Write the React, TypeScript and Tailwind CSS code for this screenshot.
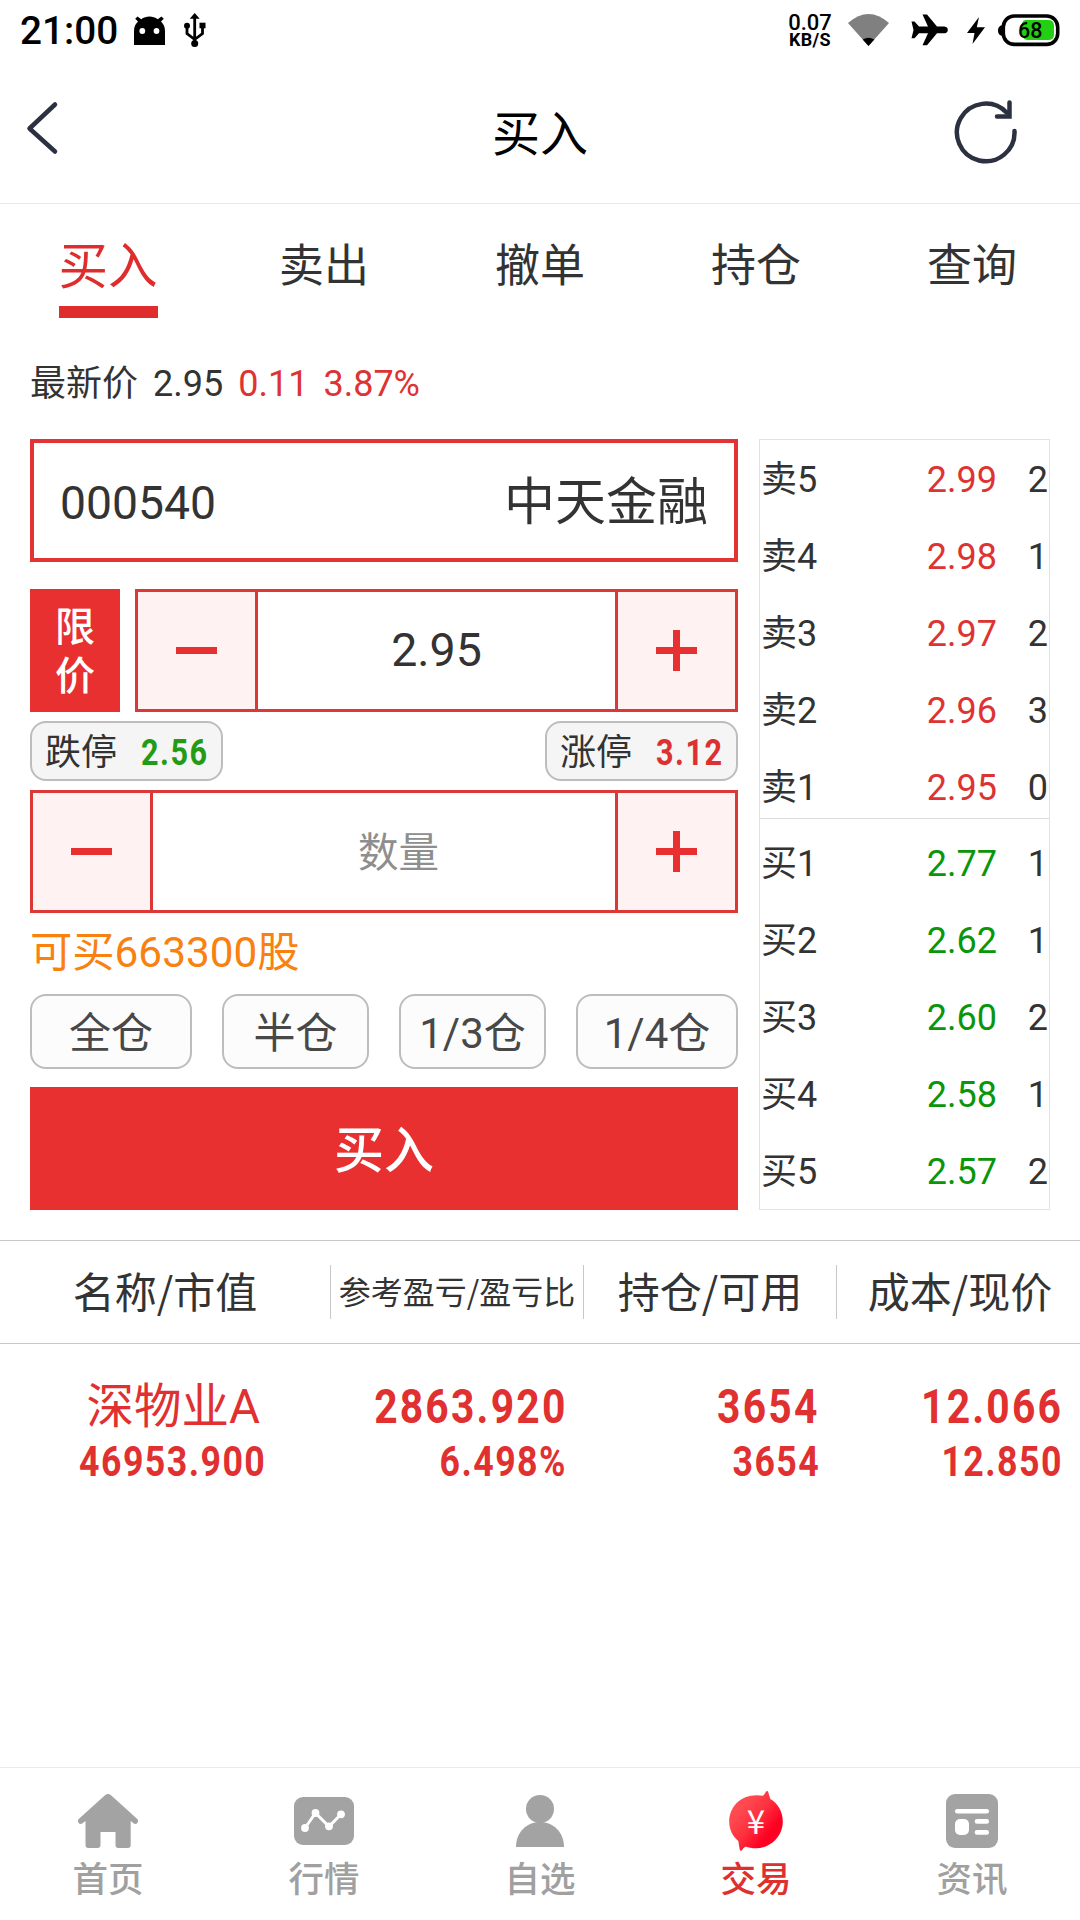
import { useState } from "react"
import type { ReactNode } from "react"
import clsx from "clsx"

const tabs = ["买入", "卖出", "撤单", "持仓", "查询"]

const asks = [
    { label: "卖5", price: "2.99", volume: "2" },
    { label: "卖4", price: "2.98", volume: "1" },
    { label: "卖3", price: "2.97", volume: "2" },
    { label: "卖2", price: "2.96", volume: "3" },
    { label: "卖1", price: "2.95", volume: "0" },
]

const bids = [
    { label: "买1", price: "2.77", volume: "1" },
    { label: "买2", price: "2.62", volume: "1" },
    { label: "买3", price: "2.60", volume: "2" },
    { label: "买4", price: "2.58", volume: "1" },
    { label: "买5", price: "2.57", volume: "2" },
]

function AndroidIcon() {
    return (
        <svg width="31" height="29" viewBox="0 0 31 29" className="ml-[17px]">
            <path d="M0 29V15C0 11 1.500 8 4 5.600L1.200 2.800L3.600 .5L7.200 3.300C12 -.4 19 -.4 23.800 3.300L27.400 .5L29.800 2.800L27 5.600C29.500 8 31 11 31 15V29Z" />
            <circle cx="8.300" cy="15" r="2.900" fill="#fff" />
            <circle cx="22.500" cy="15" r="2.900" fill="#fff" />
        </svg>
    )
}

function UsbIcon() {
    return (
        <svg width="22" height="34" viewBox="0 0 22 34" fill="none" stroke="#000" strokeWidth="2.800" className="ml-[19px]">
            <path d="M10.700 4V30M3 13V20.500L10.700 26.500M18.500 13V20.500L10.700 26.500" />
            <path d="M10.700 0L15.700 5.700H5.700Z" fill="#000" stroke="none" />
            <circle cx="3" cy="12.700" r="3" fill="#000" stroke="none" />
            <circle cx="10.700" cy="30.500" r="3.500" fill="#000" stroke="none" />
            <rect x="15.500" y="9.700" width="6" height="5.600" fill="#000" stroke="none" />
        </svg>
    )
}

function StatusBar() {
    return (
        <div className="flex h-[60px] items-center pl-[20px] pr-[20px] text-black">
            <span className="w-[97px] whitespace-nowrap pt-[2px] text-[38.7px] font-medium leading-[58px]">21:00</span>
            <AndroidIcon />
            <UsbIcon />
            <div className="ml-auto flex w-[44px] flex-col items-center pt-px">
                <span className="text-[22px] font-medium leading-[18px]">0.07</span>
                <span className="text-[18px] font-bold leading-[16px] tracking-[0.3px]">KB/S</span>
            </div>
            <svg width="41" height="32" viewBox="0 0 41 32" className="ml-[16px]">
                <path d="M0 9Q20.500 -9 41 9L20.500 32Z" fill="#808080" />
                <path d="M14.700 25.500Q20.500 22 26.300 25.500L20.500 32Z" />
            </svg>
            <svg width="37" height="32" viewBox="0 0 37 32" className="ml-[22px]">
                <path d="M0.500 7.500H3.500L8 12.500H17L11.500 .5H16L26 12.500H33.500Q36.800 13 36.800 15.900T33.500 19.300H26L16 31.300H11.500L17 19.300H8L3.500 24.300H.5L2.500 15.900Z" />
            </svg>
            <svg width="18" height="27" viewBox="0 0 18 27" className="ml-[19px]">
                <path d="M12 0L0 16H7.500L5.500 27L18 10.300H9.800Z" />
            </svg>
            <svg width="62" height="33" viewBox="0 0 62 33" className="ml-[13px]">
                <path d="M5 11Q0 11.500 0 16.500T5 22Z" />
                <rect x="5.300" y="2" width="54.400" height="28.400" rx="11" fill="#fff" stroke="#000" strokeWidth="3.600" />
                <path d="M27 6H50Q56 6 56 11.500V20.500Q56 26 50 26H30Q23.500 26 23.500 16T27 6Z" fill="#22cf12" />
                <text x="32.300" y="24" textAnchor="middle" fontSize="21.500" className="font-medium">68</text>
            </svg>
        </div>
    )
}

function Header() {
    return (
        <header className="flex h-[144px] items-center justify-between border-b border-[#e9e9e9] pl-[25px] pr-[60px]">
            <button aria-label="返回">
                <svg width="36" height="56" viewBox="0 0 36 56" fill="none" stroke="#2b3140" strokeWidth="4.500" strokeLinecap="round" strokeLinejoin="round" className="mb-[8px]">
                    <path d="M30 4.500L4.500 28.500L30 51.500" />
                </svg>
            </button>
            <h1 className="pl-[67px] pt-[6px] text-[48px] leading-[60px] text-black">买入</h1>
            <button aria-label="刷新">
                <svg width="68" height="68" viewBox="0 0 68 68" fill="none" stroke="#2b3140" strokeWidth="4.500" strokeLinecap="round">
                    <path d="M62.500 33A28.800 28.800 0 1 1 54.500 14.500" />
                    <path d="M57.500 4.500V18.500H45" />
                </svg>
            </button>
        </header>
    )
}

function Stepper({ children, className }: { children: ReactNode, className?: string }) {
    return (
        <div className={clsx("flex h-[123px] border-[3px] border-[#db3838]", className)}>
            <button className="flex w-[120px] items-center justify-center border-r-[3px] border-[#db3838] bg-[#fff2f2]" aria-label="减">
                <span className="h-[7px] w-[41px] bg-[#e83030]" />
            </button>
            <div className="flex flex-1 items-center justify-center">{children}</div>
            <button className="flex w-[120px] items-center justify-center border-l-[3px] border-[#db3838] bg-[#fff2f2]" aria-label="加">
                <svg width="41" height="41" viewBox="0 0 41 41" stroke="#e83030" strokeWidth="7">
                    <path d="M0 20.500H41M20.500 0V41" />
                </svg>
            </button>
        </div>
    )
}

function LimitPill({ label, price, color }: { label: string, price: string, color: string }) {
    return (
        <div className="flex h-[60px] w-[193px] items-center justify-between rounded-[16px] border-2 border-[#bdbdbd] bg-[#f5f5f5] pl-[13px] pr-[12px] pt-[4px]">
            <span className="text-[36px] leading-[52px]">{label}</span>
            <span className={clsx("origin-right scale-x-[0.85] text-[36px] font-bold leading-[52px] tracking-[1.8px]", color)}>{price}</span>
        </div>
    )
}

function BookRow({ label, price, volume, color }: { label: string, price: string, volume: string, color: string }) {
    return (
        <div className="flex h-[77px] shrink-0 items-center pl-px pr-px pt-[4px] text-[36px] leading-[73px]">
            <span>{label}</span>
            <span className={clsx("ml-auto", color)}>{price}</span>
            <span className="w-[51px] text-right">{volume}</span>
        </div>
    )
}

// Figures are set narrow and widely tracked, flush right
function Holding({ top, bottom, className }: { top: ReactNode, bottom: string, className: string }) {
    return (
        <div className={clsx("flex flex-col items-end font-bold text-[#e03030]", className)}>
            {typeof top === "string" ? (
                <span className="origin-right scale-x-[0.85] text-[48px] leading-[60px] tracking-[2.600px]">{top}</span>
            ) : top}
            <span className="origin-right scale-x-[0.85] text-[42px] leading-[50px] tracking-[1.700px]">{bottom}</span>
        </div>
    )
}

const navItems = [
    {
        label: "首页",
        icon: (
            <svg width="60" height="54" viewBox="0 0 60 54" fill="#a3a3a3">
                <path d="M27 1.200Q30 -1.200 33 1.200L59.300 25Q60.300 26.200 60 28Q58.600 31 55.800 29.600L52.700 27V51Q52.700 54 49.700 54H40.500Q37.500 54 37.500 51V38H22.500V51Q22.500 54 19.500 54H10.500Q7.500 54 7.500 51V27L4.200 29.600Q1.400 31 0 28Q-.3 26.200 .7 25Z" />
            </svg>
        ),
    },
    {
        label: "行情",
        icon: (
            <svg width="60" height="48" viewBox="0 0 60 48">
                <rect width="60" height="48" rx="9" fill="#a3a3a3" />
                <path d="M11 31L21.500 16L35 29.500L47 17.300" fill="none" stroke="#fff" strokeWidth="3" />
                <circle cx="11" cy="31" r="3.900" fill="#fff" />
                <circle cx="21.500" cy="16" r="3.900" fill="#fff" />
                <circle cx="35" cy="29.300" r="3.900" fill="#fff" />
                <circle cx="47" cy="17.300" r="3.900" fill="#fff" />
            </svg>
        ),
    },
    {
        label: "自选",
        icon: (
            <svg width="48" height="52" viewBox="0 0 48 52" fill="#a3a3a3">
                <circle cx="24" cy="14" r="14" />
                <path d="M0 52C0 37 11 27 24 27S48 37 48 52Z" />
            </svg>
        ),
    },
    {
        label: "交易",
        icon: (
            <svg width="54" height="60" viewBox="0 0 54 60">
                <defs>
                    <linearGradient id="trade" x1="0.250" y1="0.250" x2="0.750" y2="0.700">
                        <stop offset="0" stopColor="#ff4a50" />
                        <stop offset="0.500" stopColor="#fd303e" />
                        <stop offset="1" stopColor="#ff0022" />
                    </linearGradient>
                </defs>
                <path d="M34 4.700Q35.800 3.500 36.800 .8Q38.500 -.8 39.300 1.300L41.300 8C49 12.500 53.800 20.500 53.800 30.500C53.800 45.500 41.500 57.200 27 57.200C23 57.200 19.500 56.500 16.500 55.400Q14 57 13 59.200Q11.500 60.800 10.700 58.600L9.300 50C3.500 45 .2 38.500 .2 30.500C.2 14.500 14 1.200 34 4.700Z" fill="url(#trade)" />
                <text x="27" y="43" textAnchor="middle" fontSize="33" fill="#fff" className="font-['Noto_Sans_CJK_SC',sans-serif]">¥</text>
            </svg>
        ),
    },
    {
        label: "资讯",
        icon: (
            <svg width="52" height="54" viewBox="0 0 52 54">
                <rect width="52" height="54" rx="9" fill="#a3a3a3" />
                <rect x="9" y="15" width="34" height="4.500" rx="2.250" fill="#fff" />
                <rect x="9" y="25" width="14" height="16" rx="5" fill="#fff" />
                <rect x="28.700" y="25" width="14.300" height="4.700" rx="2.300" fill="#fff" />
                <rect x="28.700" y="36" width="14.300" height="4.700" rx="2.300" fill="#fff" />
            </svg>
        ),
    },
]

export default function App() {
    const [tab, setTab] = useState("买入")

    return (
        <main className="flex h-[1920px] w-[1080px] flex-col overflow-hidden bg-white font-['Roboto','Noto_Sans_CJK_SC',sans-serif] text-[#333]">
            <StatusBar />
            <Header />

            {/* Trade tabs */}
            <nav className="grid h-[114px] grid-cols-5 justify-items-center">
                {tabs.map((name) => (
                    <button
                        key={name}
                        onClick={() => setTab(name)}
                        className={clsx(
                            "border-b-[12px] pb-[5px] pt-[29px] leading-[56px]",
                            tab === name ? "border-[#df2d2d] text-[49.5px] text-[#df2d2d]" : "border-transparent text-[45px]"
                        )}
                    >
                        {name}
                    </button>
                ))}
            </nav>

            {/* Last price */}
            <div className="mt-[41px] flex h-[50px] items-center pl-[30px] text-[36px] leading-[50px]">
                <span>最新价</span>
                <span className="ml-[15px]">2.95</span>
                <span className="ml-[15px] text-[#dd3333]">0.11</span>
                <span className="ml-[15px] text-[#dd3333]">3.87%</span>
            </div>

            <section className="mt-[30px] flex justify-between pl-[30px] pr-[30px]">
                {/* Order form */}
                <div className="flex w-[708px] flex-col">
                    <div className="flex h-[123px] items-center justify-between border-4 border-[#e23434] pl-[26px] pr-[26px]">
                        <span className="pt-[6px] text-[46.3px]">000540</span>
                        <span className="pt-[6px] text-[51px]">中天金融</span>
                    </div>

                    <div className="mt-[27px] flex gap-[15px]">
                        <button className="flex w-[90px] items-center justify-center bg-[#e83030] px-[25px] pt-[3px] text-[40px] font-medium leading-[49px] text-white">
                            限价
                        </button>
                        <Stepper className="flex-1">
                            <span className="text-[46.5px]">2.95</span>
                        </Stepper>
                    </div>

                    <div className="my-[9px] flex justify-between">
                        <LimitPill label="跌停" price="2.56" color="text-[#239b14]" />
                        <LimitPill label="涨停" price="3.12" color="text-[#dd3030]" />
                    </div>

                    <Stepper>
                        <span className="pl-[29px] pt-[3px] text-[40.5px] text-[#8e8e8e]">数量</span>
                    </Stepper>

                    <p className="mt-[10px] h-[59px] text-[42.3px] leading-[60px] text-[#f8810f]">可买663300股</p>

                    <div className="mt-[12px] grid h-[75px] grid-cols-[162px_147px_147px_162px] gap-[30px]">
                        {["全仓", "半仓", "1/3仓", "1/4仓"].map((size) => (
                            <button key={size} className="rounded-[16px] border-2 border-[#bdbdbd] bg-[#fcfcfc] pt-[5px] text-[42px] leading-[66px] text-[#484848]">
                                {size}
                            </button>
                        ))}
                    </div>

                    <button className="mt-[18px] h-[123px] bg-[#e83030] pt-[5px] text-[50px] font-medium text-white">买入</button>
                </div>

                {/* Order book */}
                <div className="flex h-[771px] w-[291px] flex-col border border-[#e2e2e2]">
                    <div className="flex h-[379px] flex-col border-b border-[#dcdcdc]">
                        {asks.map((row) => (
                            <BookRow key={row.label} {...row} color="text-[#dd3333]" />
                        ))}
                    </div>
                    <div className="pt-[5px]">
                        {bids.map((row) => (
                            <BookRow key={row.label} {...row} color="text-[#0a960a]" />
                        ))}
                    </div>
                </div>
            </section>

            {/* Positions */}
            <section className="mt-[30px]">
                <div className="grid h-[104px] grid-cols-[331px_253px_253px_243px] items-center border-y border-[#c8c8c8] text-center font-['Noto_Sans_CJK_SC',sans-serif] text-[42px] leading-[50px]">
                    <span className="border-r border-[#c8c8c8] pb-[4px]">名称/市值</span>
                    <span className="border-r border-[#c8c8c8] pb-[4px] text-[32px]">参考盈亏/盈亏比</span>
                    <span className="border-r border-[#c8c8c8] pb-[4px]">持仓/可用</span>
                    <span className="pb-[4px] pl-[3px]">成本/现价</span>
                </div>
                <div className="flex pt-[33px]">
                    <Holding
                        className="w-[266px]"
                        top={<span className="pr-[6px] text-[47.5px] font-normal leading-[60px]">深物业A</span>}
                        bottom="46953.900"
                    />
                    <Holding className="w-[301px]" top="2863.920" bottom="6.498%" />
                    <Holding className="w-[253px]" top="3654" bottom="3654" />
                    <Holding className="w-[243px]" top="12.066" bottom="12.850" />
                </div>
            </section>

            {/* Bottom navigation */}
            <footer className="mt-auto grid h-[153px] grid-cols-5 border-t border-[#ebebeb]">
                {navItems.map((item) => (
                    <button key={item.label} className="flex flex-col items-center pt-[23px]">
                        <span className="flex h-[60px] items-center">{item.icon}</span>
                        <span className={clsx("mt-[4px] text-[35.5px] font-medium leading-[50px]", item.label === "交易" ? "text-[#df3030]" : "text-[#a0a0a0]")}>
                            {item.label}
                        </span>
                    </button>
                ))}
            </footer>
        </main>
    )
}
